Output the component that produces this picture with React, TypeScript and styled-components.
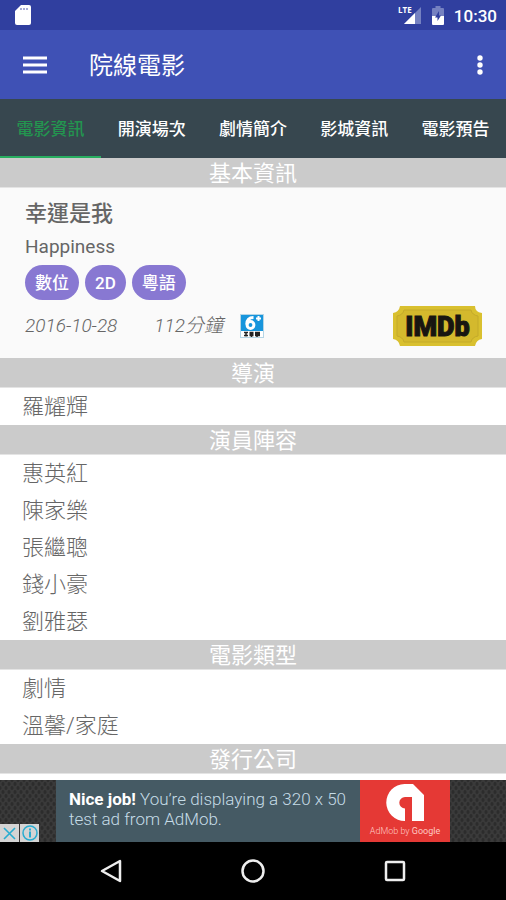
import React from 'react';
import styled, { createGlobalStyle } from 'styled-components';

const GlobalStyle = createGlobalStyle`
  *, *::before, *::after { box-sizing: border-box; }
  body {
    margin: 0;
    background: #fff;
    color: #666;
    font-family: Roboto, "Noto Sans CJK TC", sans-serif;
  }
  button { font: inherit; color: inherit; border: 0; padding: 0; background: none; cursor: pointer; }
  h1, h2, h3, p, ul { margin: 0; padding: 0; font-weight: inherit; }
  ul { list-style: none; }
  a { color: inherit; text-decoration: none; }
  svg { display: block; }
`;

const Screen = styled.div`
  display: flex;
  flex-direction: column;
  min-height: 100vh;
`;

const StatusBar = styled.div`
  display: flex;
  align-items: center;
  justify-content: space-between;
  height: 30px;
  padding: 0 9px 0 14px;
  background: #303f9f;
  color: #fff;
`;

const StatusGroup = styled.div`
  display: flex;
  align-items: center;
  gap: 10px;
`;

const Clock = styled.time`
  font-size: 17px;
  line-height: 28px;
  font-weight: 500;
  padding-top: 2px;
`;

const Toolbar = styled.header`
  display: flex;
  align-items: center;
  height: 69px;
  padding: 0 15px 0 23px;
  background: #3f51b5;
  color: #fff;
`;

const ToolbarTitle = styled.h1`
  flex: 1;
  margin-left: 42px;
  padding-top: 2px;
  font-size: 24px;
  line-height: 32px;
  font-weight: 400;
`;

const IconButton = styled.button`
  display: flex;
  align-items: center;
  justify-content: center;
  min-width: 22px;
  height: 40px;
`;

const Tabs = styled.nav`
  display: grid;
  grid-template-columns: repeat(5, 1fr);
  height: 59px;
  background: #37474f;
`;

const Tab = styled.button<{ $active?: boolean }>`
  font-size: 17px;
  line-height: 24px;
  font-weight: 500;
  color: ${p => (p.$active ? '#23954f' : '#fff')};
  border-top: 2px solid transparent;
  border-bottom: 2px solid ${p => (p.$active ? '#27ae60' : 'transparent')};
`;

const Content = styled.main`
  flex: 1;
  padding-bottom: 6px;
`;

const SectionTitle = styled.h2`
  height: 30px;
  padding-top: 1px;
  background: #cbcbcb;
  border-bottom: 1px solid #e4e4e4;
  color: #fff;
  font-size: 22px;
  line-height: 30px;
  text-align: center;
`;

const Row = styled.li`
  height: 37px;
  padding: 1px 22px 0;
  font-size: 22px;
  line-height: 36px;
  font-weight: 300;
`;

const Info = styled.div`
  display: flex;
  flex-direction: column;
  padding: 11px 24px 12px 25px;
  background: #fafafa;
`;

const MovieTitle = styled.h3`
  font-size: 22px;
  line-height: 30px;
  font-weight: 500;
`;

const Subtitle = styled.p`
  margin-top: 3px;
  font-size: 19px;
  line-height: 30px;
`;

const Chips = styled.ul`
  display: flex;
  gap: 6px;
  margin: 3px 0 6px;
`;

const Chip = styled.li`
  padding: 1px 10px 0;
  border-radius: 18px;
  background: #8878d2;
  color: #fff;
  font-size: 17px;
  line-height: 34px;
  font-weight: 500;
`;

const Facts = styled.div`
  display: flex;
  align-items: center;
  font-size: 19px;
  line-height: 40px;
  font-style: italic;
  font-weight: 300;
`;

const Duration = styled.span`
  margin: 0 17px 0 37px;
`;

const ImdbLink = styled.a`
  margin-left: auto;
`;

const AdStrip = styled.aside`
  position: relative;
  display: grid;
  grid-template-columns: 1fr minmax(0, 394px) 1fr;
  height: 62px;
  background-color: #3a3a3a;
  background-image: radial-gradient(#2c2c2c 1px, transparent 2px), radial-gradient(#2c2c2c 1px, transparent 2px);
  background-size: 6px 8px;
  background-position: 0 0, 3px 4px;
`;

const AdLink = styled.a`
  grid-column: 2;
  display: flex;
  background: #455a64;
  color: #c6dce7;
`;

const AdText = styled.p`
  flex: 1;
  padding: 9px 4px 0 13px;
  font-size: 17px;
  line-height: 20px;
  font-weight: 300;

  strong { color: #fff; font-weight: 700; }
`;

const AdBrand = styled.span`
  display: flex;
  flex-direction: column;
  align-items: center;
  width: 90px;
  padding-top: 4px;
  background: #e53935;
  color: #ffc9c4;
  font-size: 9px;
  line-height: 18px;
  font-weight: 300;
  white-space: nowrap;

  b { font-weight: 400; }
`;

const AdChoices = styled.div`
  position: absolute;
  left: 0;
  bottom: 0;
  display: flex;
  gap: 1px;
`;

const AdChoice = styled.button`
  display: flex;
  align-items: center;
  justify-content: center;
  width: 19px;
  height: 18px;
  background: #d4d4d4;
`;

const NavBar = styled.nav`
  display: grid;
  grid-template-columns: repeat(3, 142px);
  justify-content: center;
  height: 58px;
  background: #000;
`;

const NavButton = styled.button`
  display: flex;
  align-items: center;
  justify-content: center;
`;

const SdCard = () => (
  <svg width="18" height="22" viewBox="0 0 18 22" aria-hidden="true">
    <path d="M7 1h8q2 0 2 2v16q0 2-2 2H3q-2 0-2-2V7z" fill="#fff" />
    <path d="M7 4v2M10 4v2M13 4v2" stroke="#8b93c9" strokeWidth="1.5" />
  </svg>
);

const Signal = () => (
  <svg width="24" height="20" viewBox="0 0 24 20" role="img" aria-label="LTE">
    <path d="M23 2v17H6z" fill="#7581c1" />
    <path d="M17 8v11H6z" fill="#fff" />
    <path d="M0 0h15v9H0z" fill="#303f9f" />
    <text x="0" y="8" fill="#fff" fontSize="8" fontWeight="700" fontFamily="Open Sans">LTE</text>
  </svg>
);

const Battery = () => (
  <svg width="12" height="19" viewBox="0 0 12 19" aria-hidden="true">
    <path d="M3.5 0h5v2H11q1 0 1 1v7H0V3q0-1 1-1h2.5z" fill="#7581c1" />
    <path d="M0 10h12v8q0 1-1 1H1q-1 0-1-1z" fill="#fff" />
    <path d="M7 5 3 11.5h2.5V15L9 9.5H7z" fill="#303f9f" />
  </svg>
);

const MenuIcon = () => (
  <svg width="24" height="18" viewBox="0 0 24 18" aria-hidden="true">
    <path d="M0 2h24M0 9h24M0 16h24" stroke="#fff" strokeWidth="3" />
  </svg>
);

const MoreIcon = () => (
  <svg width="6" height="22" viewBox="0 0 6 22" fill="#fff" aria-hidden="true">
    <circle cx="3" cy="4" r="2.7" />
    <circle cx="3" cy="11" r="2.7" />
    <circle cx="3" cy="18" r="2.7" />
  </svg>
);

const Rating = () => (
  <svg width="24" height="24" viewBox="0 0 24 24" role="img" aria-label="6+">
    <rect x=".5" y=".5" width="23" height="23" fill="#fff" stroke="#b5d5e5" />
    <rect x="1" y="1" width="22" height="16" fill="#1795dc" />
    <path d="M13.5 3.5C9 3.5 6.8 6 6.8 10.5" fill="none" stroke="#fff" strokeWidth="3" />
    <circle cx="10.5" cy="11" r="3.4" fill="none" stroke="#fff" strokeWidth="3" />
    <path d="M18.5 2v5M16 4.5h5" stroke="#fff" strokeWidth="2" />
    <path d="M4 18.5h4M4 21.5h4M6 18v4.5M9.5 18.5h4M9.5 20h4M9.5 21.5h4M11.5 18v5M15 18.5h5M15 20h5M15 21.5h5M17 18v5" stroke="#222" strokeWidth="1.5" />
  </svg>
);

const Imdb = () => (
  <svg width="89" height="40" viewBox="0 0 89 40" aria-hidden="true">
    <path d="M7 0h75q0 6 7 7v26q-6 1-7 7H7q-1-6-7-7V7q6-1 7-7z" fill="#d9c02f" />
    <path d="M11 4h67q1 5 7 6v20q-6 1-7 6H11q-1-5-7-6V10q6-1 7-6z" fill="#d4b92d" stroke="#c4aa2b" />
    <text x="44.5" y="30" textAnchor="middle" fill="#181611" stroke="#181611" fontSize="27" fontWeight="900" fontStyle="normal" fontFamily="Roboto">IMDb</text>
  </svg>
);

const AdMobLogo = () => (
  <svg width="38" height="38" viewBox="0 0 38 38" aria-hidden="true">
    <path d="M18.5 0H27l11 11v26H26V13h-7a5.7 5.7 0 0 0 0 11.4V37A18.5 18.5 0 0 1 18.5 0z" fill="#fff" />
  </svg>
);

const tabs = ['電影資訊', '開演場次', '劇情簡介', '影城資訊', '電影預告'];
const chips = ['數位', '2D', '粵語'];
const sections = [
  { title: '導演', rows: ['羅耀輝'] },
  { title: '演員陣容', rows: ['惠英紅', '陳家樂', '張繼聰', '錢小豪', '劉雅瑟'] },
  { title: '電影類型', rows: ['劇情', '溫馨/家庭'] },
  { title: '發行公司', rows: [] },
];

export default function App() {
  return (
    <>
      <GlobalStyle />
      <Screen>
        <StatusBar>
          <SdCard />
          <StatusGroup>
            <Signal />
            <Battery />
            <Clock>10:30</Clock>
          </StatusGroup>
        </StatusBar>
        <Toolbar>
          <IconButton aria-label="選單"><MenuIcon /></IconButton>
          <ToolbarTitle>院線電影</ToolbarTitle>
          <IconButton aria-label="更多"><MoreIcon /></IconButton>
        </Toolbar>
        <Tabs>
          {tabs.map((name, i) => (
            <Tab key={name} $active={i === 0}>{name}</Tab>
          ))}
        </Tabs>
        <Content>
          <SectionTitle>基本資訊</SectionTitle>
          <Info>
            <MovieTitle>幸運是我</MovieTitle>
            <Subtitle>Happiness</Subtitle>
            <Chips>
              {chips.map(chip => <Chip key={chip}>{chip}</Chip>)}
            </Chips>
            <Facts>
              <time>2016-10-28</time>
              <Duration>112分鐘</Duration>
              <Rating />
              <ImdbLink href="#imdb" aria-label="IMDb"><Imdb /></ImdbLink>
            </Facts>
          </Info>
          {sections.map(section => (
            <section key={section.title}>
              <SectionTitle>{section.title}</SectionTitle>
              <ul>
                {section.rows.map(row => <Row key={row}>{row}</Row>)}
              </ul>
            </section>
          ))}
        </Content>
        <AdStrip>
          <AdLink href="#ad">
            <AdText><strong>Nice job!</strong> You’re displaying a 320 x 50 test ad from AdMob.</AdText>
            <AdBrand>
              <AdMobLogo />
              <span>AdMob by <b>Google</b></span>
            </AdBrand>
          </AdLink>
          <AdChoices>
            <AdChoice aria-label="關閉廣告">
              <svg width="13" height="13" viewBox="0 0 13 13"><path d="m1 1 11 11M12 1 1 12" stroke="#28acd0" strokeWidth="1.6" /></svg>
            </AdChoice>
            <AdChoice aria-label="廣告資訊">
              <svg width="16" height="16" viewBox="0 0 16 16" fill="none" stroke="#28acd0" strokeWidth="1.5">
                <circle cx="8" cy="8" r="7" />
                <path d="M8 3.5v2M8 6.5v6" strokeWidth="2" />
              </svg>
            </AdChoice>
          </AdChoices>
        </AdStrip>
        <NavBar>
          <NavButton aria-label="返回">
            <svg width="22" height="24" viewBox="0 0 22 24" fill="none" stroke="#eee" strokeWidth="2.5" strokeLinejoin="round"><path d="M20 2v20L2 12z" /></svg>
          </NavButton>
          <NavButton aria-label="主畫面">
            <svg width="24" height="24" viewBox="0 0 24 24" fill="none" stroke="#eee" strokeWidth="2.5"><circle cx="12" cy="12" r="10.5" /></svg>
          </NavButton>
          <NavButton aria-label="最近使用">
            <svg width="22" height="22" viewBox="0 0 22 22" fill="none" stroke="#eee" strokeWidth="2.5"><rect x="2" y="2" width="18" height="18" rx="1" /></svg>
          </NavButton>
        </NavBar>
      </Screen>
    </>
  );
}
